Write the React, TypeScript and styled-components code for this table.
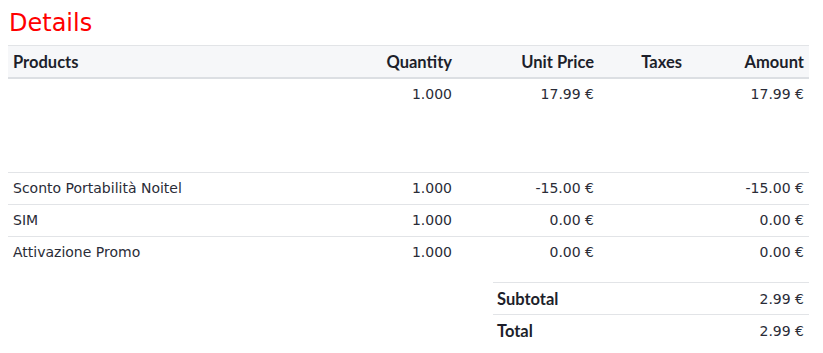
import React from 'react';
import styled, { createGlobalStyle } from 'styled-components';

const GlobalStyle = createGlobalStyle`
  body {
    margin: 8px;
    background: #fff;
    font-family: "DejaVu Sans", "Open Sans", sans-serif;
    color: #212529;
  }
`;

const lines = [
  { name: '', qty: '1.000', price: '17.99 €', taxes: '', amount: '17.99 €', tall: true },
  { name: 'Sconto Portabilità Noitel', qty: '1.000', price: '-15.00 €', taxes: '', amount: '-15.00 €' },
  { name: 'SIM', qty: '1.000', price: '0.00 €', taxes: '', amount: '0.00 €' },
  { name: 'Attivazione Promo', qty: '1.000', price: '0.00 €', taxes: '', amount: '0.00 €' },
];

const App = () => {
  return (
    <Page>
      <GlobalStyle />
      <Title>Details</Title>
      <Table>
        <colgroup>
          <col />
          <col style={{ width: 157 }} />
          <col style={{ width: 142 }} />
          <col style={{ width: 88 }} />
          <col style={{ width: 122 }} />
        </colgroup>
        <thead>
          <tr>
            <Th>Products</Th>
            <Th $right>Quantity</Th>
            <Th $right>Unit Price</Th>
            <Th $right>Taxes</Th>
            <Th $right>Amount</Th>
          </tr>
        </thead>
        <tbody>
          {lines.map((l, i) => (
            <Row key={i} $tall={l.tall} $first={i === 0}>
              <Td>{l.name}</Td>
              <Td $right>{l.qty}</Td>
              <Td $right>{l.price}</Td>
              <Td $right>{l.taxes}</Td>
              <Td $right>{l.amount}</Td>
            </Row>
          ))}
        </tbody>
      </Table>
      <Totals>
        <TotalRow>
          <TotalLabel>Subtotal</TotalLabel>
          <TotalValue>2.99 €</TotalValue>
        </TotalRow>
        <TotalRow>
          <TotalLabel>Total</TotalLabel>
          <TotalValue>2.99 €</TotalValue>
        </TotalRow>
      </Totals>
    </Page>
  );
};
export default App;

const Page = styled.div`
  width: 801px;
  display: flex;
  flex-direction: column;
`;

const Title = styled.h2`
  margin: 0 0 0 1px;
  height: 37px;
  font-family: "DejaVu Sans", sans-serif;
  font-weight: 400;
  font-size: 24px;
  line-height: 30px;
  color: #ff0000;
`;

const Table = styled.table`
  width: 801px;
  border-collapse: collapse;
  table-layout: fixed;
`;

const Th = styled.th<{ $right?: boolean }>`
  height: 31px;
  padding: 0 5px;
  background: #f6f7f9;
  border-top: 1px solid #e2e4e7;
  border-bottom: 2px solid #dcdfe3;
  text-align: ${p => (p.$right ? 'right' : 'left')};
  font-family: Lato, sans-serif;
  font-weight: 700;
  font-size: 16.5px;
  color: #1d1f2b;
`;

const Row = styled.tr<{ $tall?: boolean; $first?: boolean }>`
  height: ${p => (p.$tall ? '94px' : '32px')};
  border-top: ${p => (p.$first ? 'none' : '1px solid #e2e4e7')};
  vertical-align: ${p => (p.$tall ? 'top' : 'middle')};
`;

const Td = styled.td<{ $right?: boolean }>`
  padding: 0 5px;
  text-align: ${p => (p.$right ? 'right' : 'left')};
  font-size: 14px;
  line-height: 30px;
  color: #2a2c37;
`;

const Totals = styled.div`
  align-self: flex-end;
  width: 316px;
  margin-top: 14px;
  display: flex;
  flex-direction: column;
`;

const TotalRow = styled.div`
  box-sizing: border-box;
  height: 32px;
  border-top: 1px solid #e2e4e7;
  display: flex;
  align-items: center;
  justify-content: space-between;
  padding: 0 5px 0 4px;
`;

const TotalLabel = styled.span`
  font-family: Lato, sans-serif;
  font-weight: 700;
  font-size: 16.5px;
  color: #1d1f2b;
`;

const TotalValue = styled.span`
  font-size: 14px;
  color: #2a2c37;
`;
